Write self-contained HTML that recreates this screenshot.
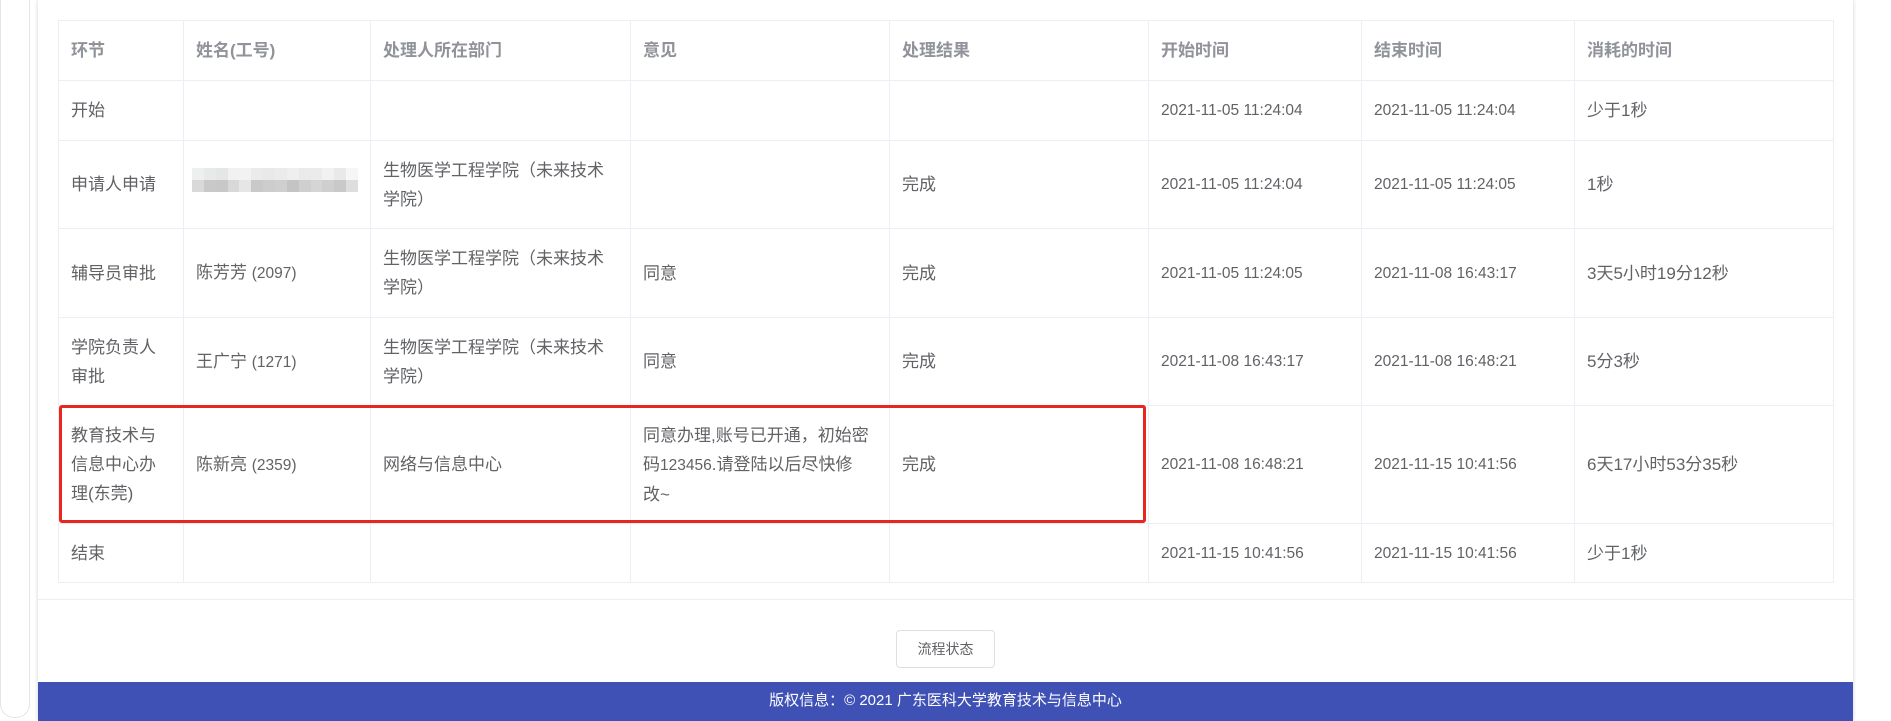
<!DOCTYPE html>
<html><head><meta charset="utf-8"><style>
*{margin:0;padding:0;box-sizing:border-box}
body{width:1891px;height:721px;background:#fff;position:relative;overflow:hidden;font-family:"Liberation Sans","Noto Sans CJK SC",sans-serif;color:#606266}
.outer{position:absolute;left:0;top:-10px;width:30px;height:728px;border:1px solid #e4e4e4;border-radius:0 0 14px 14px;border-top:none}
.card{position:absolute;left:38px;top:0;width:1815px;height:721px;background:#fff;box-shadow:0 0 4px rgba(0,0,0,.18)}
table{position:absolute;left:58px;top:20px;border-collapse:collapse;table-layout:fixed;font-size:17px}
td,th{border:1px solid #ebeef5;padding:0 12px;text-align:left;vertical-align:middle;line-height:29px;font-weight:normal}
th{color:#909399;font-weight:bold;height:60px}
td.d{font-size:15.5px}
.n{font-size:15.5px}
.sep{position:absolute;left:38px;top:599px;width:1815px;height:1px;background:#ebeef5}
.btn{position:absolute;left:896px;top:630px;width:99px;height:38px;border:1px solid #dcdfe6;border-radius:4px;font-size:14px;line-height:36px;text-align:center;color:#606266}
.foot{position:absolute;left:38px;top:682px;width:1815px;height:39px;background:#3f51b5;color:#fff;font-size:15px;text-align:center;line-height:37px}
.red{position:absolute;left:59px;top:405px;width:1087px;height:118px;border:3px solid #e8261f;border-radius:3px}
.blur{position:absolute;left:192px;top:168px;width:166px;height:24px;display:grid;grid-template-columns:repeat(14,1fr);grid-template-rows:1fr 1fr}
.blur i{display:block}
</style></head><body>
<div class="outer"></div>
<div class="card"></div>
<table>
<colgroup><col style="width:125px"><col style="width:187px"><col style="width:260px"><col style="width:259px"><col style="width:259px"><col style="width:213px"><col style="width:213px"><col style="width:259px"></colgroup>
<tr><th>环节</th><th>姓名(工号)</th><th>处理人所在部门</th><th>意见</th><th>处理结果</th><th>开始时间</th><th>结束时间</th><th>消耗的时间</th></tr>
<tr style="height:60px"><td>开始</td><td></td><td></td><td></td><td></td><td class="d">2021-11-05 11:24:04</td><td class="d">2021-11-05 11:24:04</td><td>少于1秒</td></tr>
<tr style="height:88px"><td>申请人申请</td><td></td><td>生物医学工程学院（未来技术<br>学院）</td><td></td><td>完成</td><td class="d">2021-11-05 11:24:04</td><td class="d">2021-11-05 11:24:05</td><td>1秒</td></tr>
<tr style="height:89px"><td>辅导员审批</td><td>陈芳芳 <span class="n">(2097)</span></td><td>生物医学工程学院（未来技术<br>学院）</td><td>同意</td><td>完成</td><td class="d">2021-11-05 11:24:05</td><td class="d">2021-11-08 16:43:17</td><td>3天5小时19分12秒</td></tr>
<tr style="height:88px"><td>学院负责人<br>审批</td><td>王广宁 <span class="n">(1271)</span></td><td>生物医学工程学院（未来技术<br>学院）</td><td>同意</td><td>完成</td><td class="d">2021-11-08 16:43:17</td><td class="d">2021-11-08 16:48:21</td><td>5分3秒</td></tr>
<tr style="height:118px"><td>教育技术与<br>信息中心办<br>理(东莞)</td><td>陈新亮 <span class="n">(2359)</span></td><td>网络与信息中心</td><td>同意办理,账号已开通，初始密<br>码<span class="n">123456</span>.请登陆以后尽快修<br>改~</td><td>完成</td><td class="d">2021-11-08 16:48:21</td><td class="d">2021-11-15 10:41:56</td><td>6天17小时53分35秒</td></tr>
<tr style="height:59px"><td>结束</td><td></td><td></td><td></td><td></td><td class="d">2021-11-15 10:41:56</td><td class="d">2021-11-15 10:41:56</td><td>少于1秒</td></tr>
</table>
<div class="blur">
<i style="background:#eef0ef"></i><i style="background:#e8e9e9"></i><i style="background:#e5e6e6"></i><i style="background:#f1f1f1"></i><i style="background:#f2f2f2"></i><i style="background:#ebebeb"></i><i style="background:#e9e9e9"></i><i style="background:#ebebeb"></i><i style="background:#efefef"></i><i style="background:#eaeaea"></i><i style="background:#ebebeb"></i><i style="background:#f1f1f1"></i><i style="background:#e9e9e9"></i><i style="background:#f6f6f6"></i>
<i style="background:#d9d9d9"></i><i style="background:#c9c9c9"></i><i style="background:#c8c8c8"></i><i style="background:#d8d8d8"></i><i style="background:#e6e6e6"></i><i style="background:#c9c9c9"></i><i style="background:#cdcdcd"></i><i style="background:#cfcfcf"></i><i style="background:#c4c4c4"></i><i style="background:#cfcfcf"></i><i style="background:#d5d5d5"></i><i style="background:#cfcfcf"></i><i style="background:#c9c9c9"></i><i style="background:#dedede"></i>
</div>
<div class="red"></div>
<div class="sep"></div>
<div class="btn">流程状态</div>
<div class="foot">版权信息：© 2021 广东医科大学教育技术与信息中心</div>
</body></html>
